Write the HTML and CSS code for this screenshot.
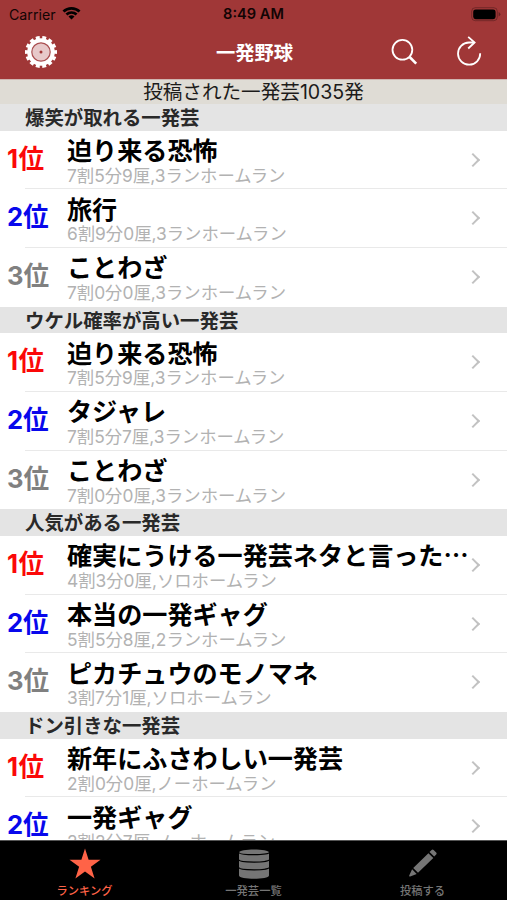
FILE: index.html
```
<!DOCTYPE html>
<html lang="ja">
<head>
<meta charset="utf-8">
<title>一発野球</title>
<link rel="stylesheet" href="styles.css">
</head>
<body>
<div class="app">
  <header class="top">
    <div class="status">
      <div class="carrier"><span>Carrier</span>
        <svg width="19" height="14" viewBox="0 0 19 14"><path d="M.5 4.6a12.8 12.8 0 0 1 18 0l-1.9 2a10.1 10.1 0 0 0-14.2 0zM3.5 7.6a8.6 8.6 0 0 1 12 0l-1.9 1.9a5.9 5.9 0 0 0-8.2 0zM6.5 10.6a4.3 4.3 0 0 1 6 0l-3 3z"/></svg>
      </div>
      <div class="clock">8:49 AM</div>
      <div class="battery">
        <svg width="30" height="15" viewBox="0 0 30 15"><rect x=".7" y=".7" width="25.6" height="13" rx="3.6" fill="none" stroke="#000" stroke-opacity=".28"/><rect x="2.2" y="2.4" width="22.4" height="9.8" rx="2.4"/><path d="M27.6 5v4.6q1.8-.8 1.8-2.3T27.6 5z" fill-opacity=".35"/></svg>
      </div>
    </div>
    <nav class="nav">
      <svg class="gear" width="34" height="34" viewBox="-17 -17 34 34"><circle r="13.8" fill="#fff"/><circle r="14.2" fill="none" stroke="#fff" stroke-width="3.6" pathLength="140" stroke-dasharray="6 4" stroke-dashoffset="3"/><circle r="9.2" fill="#e7c9ca" stroke="#a94f51" stroke-width="1.2"/><circle r="1.5" fill="#a03737"/></svg>
      <h1>一発野球</h1>
      <svg class="search" width="27" height="28" viewBox="0 0 27 28" fill="none" stroke="#fff"><circle cx="11.4" cy="11.8" r="9.9" stroke-width="1.8"/><path d="M18.6 19l6.6 6.6" stroke-width="2.6"/></svg>
      <svg class="reload" width="26" height="30" viewBox="0 0 26 30" fill="none" stroke="#fff" stroke-width="1.8"><path d="M18.3 6.5H13A11.1 11.1 0 1 0 24.2 17.3"/><path d="M12.2.8l6.4 5.7-6.4 6"/></svg>
    </nav>
  </header>
  <p class="total">投稿された一発芸1035発</p>
  <main class="list">
    <section>
      <h2>爆笑が取れる一発芸</h2>
      <a class="row"><b class="rank first">1位</b><span class="info"><strong>迫り来る恐怖</strong><small>7割5分9厘,3ランホームラン</small></span><i class="arrow"></i></a>
      <a class="row"><b class="rank second">2位</b><span class="info"><strong>旅行</strong><small>6割9分0厘,3ランホームラン</small></span><i class="arrow"></i></a>
      <a class="row"><b class="rank third">3位</b><span class="info"><strong>ことわざ</strong><small>7割0分0厘,3ランホームラン</small></span><i class="arrow"></i></a>
    </section>
    <section>
      <h2>ウケル確率が高い一発芸</h2>
      <a class="row"><b class="rank first">1位</b><span class="info"><strong>迫り来る恐怖</strong><small>7割5分9厘,3ランホームラン</small></span><i class="arrow"></i></a>
      <a class="row"><b class="rank second">2位</b><span class="info"><strong>タジャレ</strong><small>7割5分7厘,3ランホームラン</small></span><i class="arrow"></i></a>
      <a class="row"><b class="rank third">3位</b><span class="info"><strong>ことわざ</strong><small>7割0分0厘,3ランホームラン</small></span><i class="arrow"></i></a>
    </section>
    <section>
      <h2>人気がある一発芸</h2>
      <a class="row"><b class="rank first">1位</b><span class="info"><strong>確実にうける一発芸ネタと言った…</strong><small>4割3分0厘,ソロホームラン</small></span><i class="arrow"></i></a>
      <a class="row"><b class="rank second">2位</b><span class="info"><strong>本当の一発ギャグ</strong><small>5割5分8厘,2ランホームラン</small></span><i class="arrow"></i></a>
      <a class="row"><b class="rank third">3位</b><span class="info"><strong>ピカチュウのモノマネ</strong><small>3割7分1厘,ソロホームラン</small></span><i class="arrow"></i></a>
    </section>
    <section>
      <h2>ドン引きな一発芸</h2>
      <a class="row"><b class="rank first">1位</b><span class="info"><strong>新年にふさわしい一発芸</strong><small>2割0分0厘,ノーホームラン</small></span><i class="arrow"></i></a>
      <a class="row"><b class="rank second">2位</b><span class="info"><strong>一発ギャグ</strong><small>2割2分7厘,ノーホームラン</small></span><i class="arrow"></i></a>
    </section>
  </main>
  <footer class="tabs">
    <a class="tab active">
      <svg width="32" height="32" viewBox="0 0 32 32"><path d="M16 .5l3.6 11.3 11.9-.1-9.6 7 3.7 11.8L16 23.4l-9.6 7.1 3.7-11.8-9.6-7 11.9.1z" fill="#ff6347"/></svg>
      <span>ランキング</span></a>
    <a class="tab">
      <svg width="32" height="32" viewBox="0 0 32 32" fill="#757575"><path d="M1 4.5C1 .5 31 .5 31 4.5v23c0 4.4-30 4.4-30 0z"/><path d="M1 4.6c0 2.8 30 2.8 30 0M1 11.8c0 3 30 3 30 0M1 19.6c0 3 30 3 30 0" fill="none" stroke="#000" stroke-width="1.2"/></svg>
      <span>一発芸一覧</span></a>
    <a class="tab">
      <svg width="32" height="32" viewBox="0 0 32 32" fill="#757575"><path d="M21.4 5.2l4.9 4.8L11 24.8l-4.8-4.8zM22.5 4.1l2.1-2.2q1-.9 2 0l2.6 2.5q1 1 0 2l-2 2.2zM5.1 21.3l4.6 4.6L3.2 28.5q-1.3.3-1-.9z"/></svg>
      <span>投稿する</span></a>
  </footer>
</div>
</body>
</html>
```
FILE: styles.css
```
* { box-sizing: border-box; margin: 0; padding: 0; }
body { background: #fff; font-family: Inter, "Noto Sans CJK JP", sans-serif; }
svg { display: block; flex: none; }
.app { width: 507px; height: 900px; display: flex; flex-direction: column; overflow: hidden; }
.top { height: 79px; flex: none; background: #a03737; }
.status { height: 27px; display: grid; grid-template-columns: 1fr auto 1fr; align-items: center; padding: 0 6px 0 9px; line-height: 27px; color: #120404; }
.carrier { display: flex; align-items: center; gap: 6px; font-size: 14.2px; }
.carrier svg { margin-top: -3px; }
.clock { font-weight: 600; font-size: 14.6px; margin-right: 3px; padding-top: 1px; }
.battery { justify-self: end; }
.nav { height: 52px; display: grid; grid-template-columns: 216px 174px 27px 1fr; align-items: center; padding-right: 25px; }
.gear { margin-left: 24px; margin-top: -2px; }
.nav h1 { font-size: 19.3px; line-height: 28px; font-weight: 700; color: #fff; margin-top: -1px; }
.reload { justify-self: end; margin-top: -5px; }
.search { margin: -2px 0 0 1px; }
.total { height: 25px; flex: none; background: #dfdcd5; border-top: 1px solid #d0b5b0; text-align: center; font-size: 19.6px; line-height: 25px; color: #1c1b1a; }
.list { flex: 1; min-height: 0; overflow: hidden; }
h2 { height: 26.6px; background: #e4e4e4; padding-left: 25px; font-size: 19.4px; line-height: 28.6px; font-weight: 700; color: #292929; }
.row { height: 58.7px; display: grid; grid-template-columns: 60px 1fr 25px; padding-left: 7px; background: linear-gradient(#e9e9e9, #e9e9e9) 25px 100% / 100% 1px no-repeat; }
.row:last-child { background: none; }
.rank { font-size: 25.6px; line-height: 56px; white-space: nowrap; }
.first { color: #fb0808; letter-spacing: .5px; }
.second { color: #0808ec; }
.third { color: #808080; }
.info { display: flex; flex-direction: column; min-width: 0; white-space: nowrap; }
strong { font-family: "Noto Sans CJK JP", sans-serif; font-size: 25.1px; line-height: 32px; height: 35px; padding-top: 2.4px; font-weight: 700; color: #000; }
small { font-size: 17.35px; line-height: 20px; font-weight: 400; color: #b2b2b2; }
.arrow { width: 10px; height: 10px; margin: 24px 0 0 -14px; border: solid #c2c2c2; border-width: 2px 2px 0 0; transform: rotate(45deg); }
.tabs { height: 60px; flex: none; background: #000; border-top: 1px solid #555; display: grid; grid-template-columns: repeat(3, 1fr); color: #757575; }
.tab { display: flex; flex-direction: column; align-items: center; padding-top: 7px; }
.tab span { font-size: 11.3px; line-height: 16px; margin-top: 3px; font-weight: 500; }
.active { color: #ff6347; }
```
